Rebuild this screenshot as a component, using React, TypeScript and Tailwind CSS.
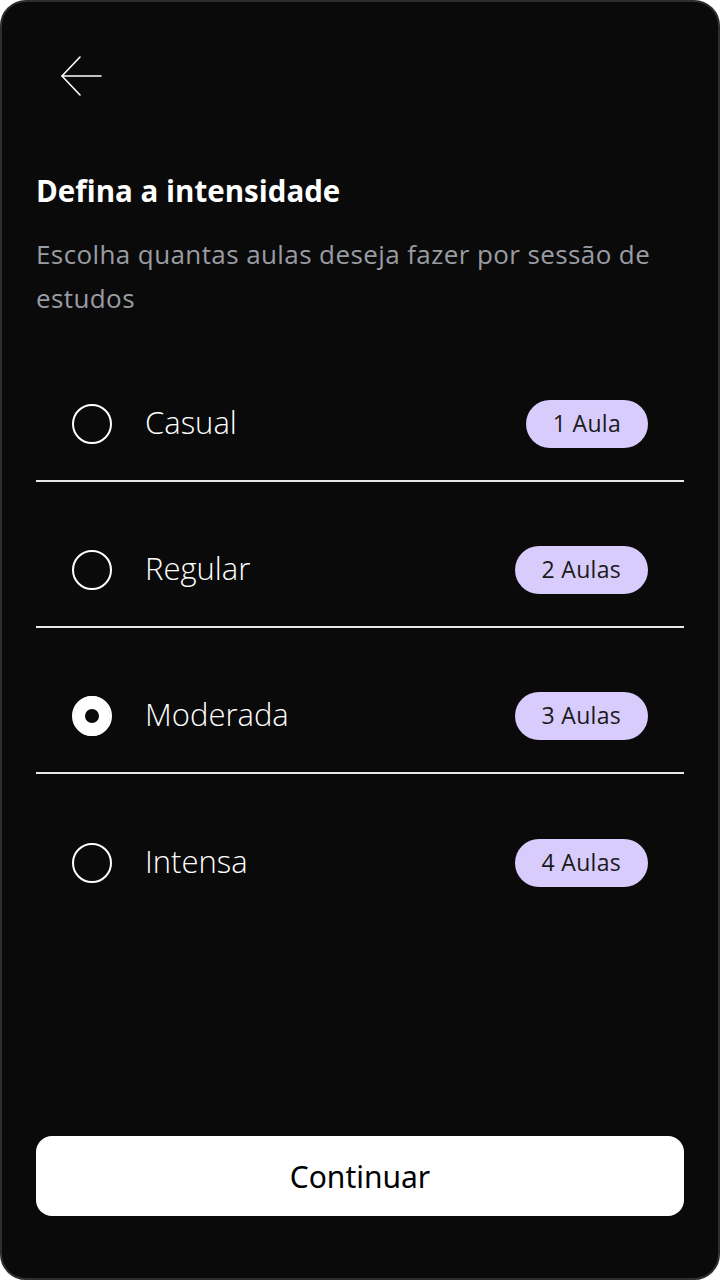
import React from "react";

const options = [
  { label: "Casual", badge: "1 Aula", selected: false },
  { label: "Regular", badge: "2 Aulas", selected: false },
  { label: "Moderada", badge: "3 Aulas", selected: true },
  { label: "Intensa", badge: "4 Aulas", selected: false },
];

export default function App() {
  return (
    <div className="w-[720px] h-[1280px] bg-white">
      <div
        className="w-full h-full rounded-[26px] bg-[#0a0a0a] border-2 border-[#2e2e2e] flex flex-col text-white"
        style={{ fontFamily: "'Open Sans', 'Noto Sans', sans-serif" }}
      >
        <div className="pl-[58px] pt-[53px] h-[96px]">
          <svg width="42" height="42" viewBox="0 0 42 42" fill="none" stroke="white" strokeWidth="1.6" strokeLinecap="round" strokeLinejoin="round">
            <path d="M41 21H2" />
            <path d="M20 2L2 21L20 40" />
          </svg>
        </div>
        <div className="px-[34px] pt-[75px]">
          <h1 className="text-[29.5px] font-bold leading-[36px]">Defina a intensidade</h1>
          <p className="mt-[23px] text-[26px] tracking-[0.4px] leading-[44px] text-[#9a9ca3] pr-[10px]">
            Escolha quantas aulas deseja fazer por sessão de estudos
          </p>
        </div>
        <div className="px-[34px] mt-[47px] flex flex-col">
          {options.map((o, i) => (
            <div key={o.label} className={i > 0 ? "mt-[31px]" : ""}>
              <div className={"h-[115px] flex items-center pl-[36px] pr-[36px] " + (i < options.length - 1 ? "border-b-2 border-[#e8e8e8]" : "")}>
                <div className="w-[40px] h-[40px] rounded-full border-2 border-white flex items-center justify-center shrink-0">
                  {o.selected && (
                    <div className="w-[40px] h-[40px] rounded-full bg-white flex items-center justify-center">
                      <div className="w-[14px] h-[14px] rounded-full bg-[#0a0a0a]" />
                    </div>
                  )}
                </div>
                <span className="ml-[33px] text-[31px] leading-[40px] -mt-[3px] font-light">{o.label}</span>
                <span className="ml-auto h-[48px] rounded-full bg-[#d7ccfb] text-[#1a1a1a] text-[23px] tracking-[0.3px] px-[27px] flex items-center">
                  {o.badge}
                </span>
              </div>
            </div>
          ))}
        </div>
        <div className="flex-1" />
        <div className="px-[34px] pb-[62px]">
          <button
            className="w-full h-[80px] rounded-[16px] bg-white text-black text-[30px]"
            style={{ fontFamily: "'Noto Sans', sans-serif" }}
          >
            Continuar
          </button>
        </div>
      </div>
    </div>
  );
}
